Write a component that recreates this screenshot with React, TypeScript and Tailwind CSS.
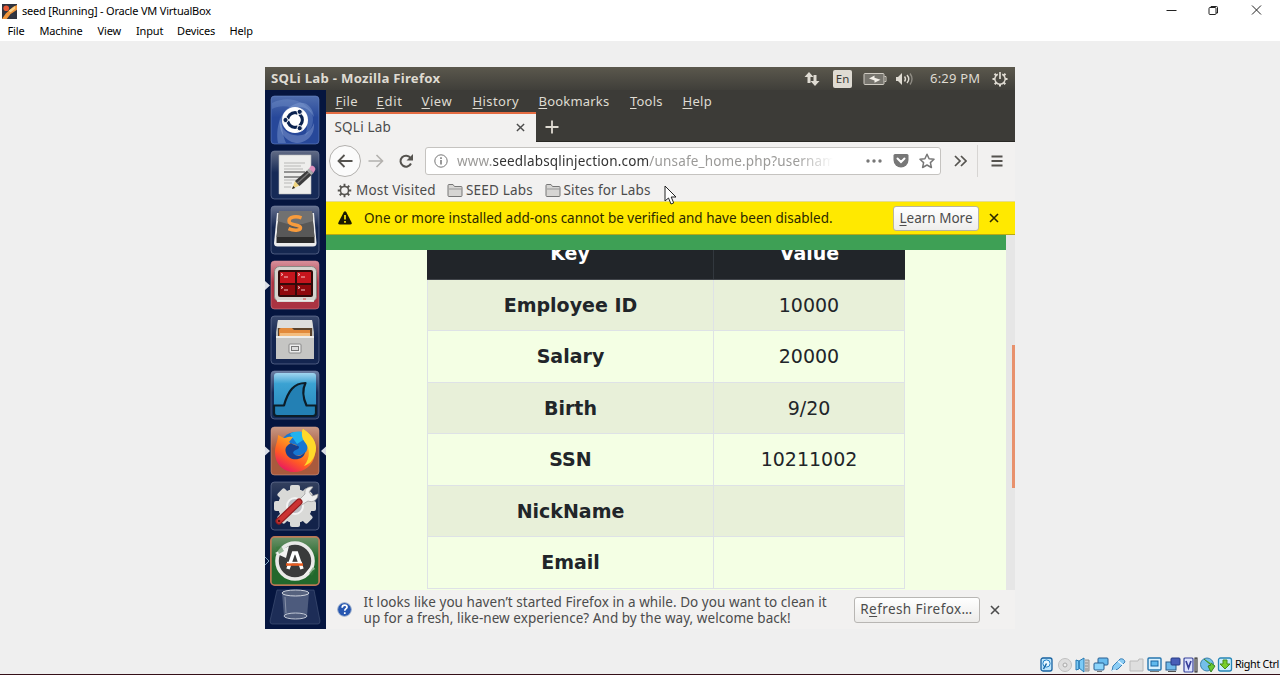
import type { ReactNode } from "react";

const windowMenu = [
  { label: "File", cls: "w-[32px]" },
  { label: "Machine", cls: "w-[58px]" },
  { label: "View", cls: "w-[38.5px]" },
  { label: "Input", cls: "w-[41px]" },
  { label: "Devices", cls: "w-[52.5px]" },
  { label: "Help", cls: "w-[40px]" },
];

const firefoxMenu = [
  { label: "File", cls: "w-[41px] tracking-[0.4px]" },
  { label: "Edit", cls: "w-[45px] tracking-[0.7px]" },
  { label: "View", cls: "w-[51px] tracking-[0.6px]" },
  { label: "History", cls: "w-[66px] tracking-[0.4px]" },
  { label: "Bookmarks", cls: "w-[91.5px] tracking-[0.2px]" },
  { label: "Tools", cls: "w-[52.5px] tracking-[0.2px]" },
  { label: "Help", cls: "w-[40px] tracking-[0.3px]" },
];

const rows = [
  ["Employee ID", "10000"],
  ["Salary", "20000"],
  ["Birth", "9/20"],
  ["SSN", "10211002"],
  ["NickName", ""],
  ["Email", ""],
];

function Accel({ text }: { text: string }) {
  return (
    <>
      <span className="underline decoration-1 underline-offset-2">{text[0]}</span>
      {text.slice(1)}
    </>
  );
}

function Close({ className }: { className: string }) {
  return (
    <svg viewBox="0 0 10 10" className={className} fill="none" stroke="currentColor" strokeWidth="1.6">
      <path d="M1 1l8 8M9 1L1 9" />
    </svg>
  );
}

function Tile({ id, from, to, edge = "#7d88a8", children }: { id: string; from: string; to: string; edge?: string; children: ReactNode }) {
  return (
    <svg viewBox="0 0 50 50" className="block h-[50px] w-[50px] shrink-0">
      <defs>
        <linearGradient id={id} x1="0" y1="0" x2="0" y2="1">
          <stop offset="0" stopColor={from} />
          <stop offset="0.45" stopColor={to} />
          <stop offset="1" stopColor={to} />
        </linearGradient>
      </defs>
      <rect x="1" y="1" width="48" height="48" rx="3.5" fill={`url(#${id})`} stroke={edge} strokeOpacity="0.55" />
      {children}
    </svg>
  );
}

function Dash() {
  return (
    <Tile id="t-dash" from="#4f6dad" to="#27489a" edge="#6f8acb">
      <path d="M8 48C5 30 12 12 28 8c9-2 15 5 16 14-5-9-12-12-20-9C12 18 9 30 16 48z" fill="#8ea9da" opacity=".4" />
      <path d="M2 8c14-7 30-4 39 8 4 8 2 18-6 25 4-10 2-18-6-24C20 10 10 10 2 14z" fill="#86a2d6" opacity=".3" />
      <path d="M10 22c0 14 10 20 22 18 5-1 10-6 12-12 1 12-7 20-18 20C14 46 8 36 10 22z" fill="#a8bde4" opacity=".35" />
      <circle cx="25" cy="25" r="13" fill="#fff" />
      <circle cx="25" cy="25" r="7.300" fill="none" stroke="#0b2350" strokeWidth="3.200" />
      <path d="M25 25h-11M25 25l5.500-9.500M25 25l5.500 9.500" stroke="#fff" strokeWidth="1.500" />
      <circle cx="25" cy="25" r="5.500" fill="#fff" />
      {[[15.5, 25], [29.7, 16.8], [29.7, 33.2]].map(([x, y]) => (
        <circle key={`${x}${y}`} cx={x} cy={y} r="2.600" fill="#0b2350" stroke="#fff" strokeWidth="1" />
      ))}
    </Tile>
  );
}

function Editor() {
  return (
    <Tile id="t-edit" from="#626b85" to="#162a57">
      <path d="M9 5h32v39H9z" fill="#eeeeec" stroke="#bcbcbc" strokeWidth=".6" />
      <path d="M14 13h21M14 16h17M14 19h19M14 22h21M14 27h20M14 30h15M14 33h8M14 37h7" stroke="#aaa" strokeWidth=".8" />
      <path d="M14 22h21M14 27h17" stroke="#555" strokeWidth="1" />
      <path d="M22 39l3-8 4.500 4.500z" fill="#eed47f" />
      <path d="M22 39l1.200-3 2 2z" fill="#222" />
      <path d="M25 31L37 20.500l4.500 4.500L29.500 36z" fill="#3c3c3c" />
      <path d="M27.500 33L39 22.500" stroke="#777" strokeWidth="1.300" />
      <path d="M37 20.500l2-2 4.500 4.500-2 2z" fill="#a8a8a8" />
      <path d="M39 18.500l2-2.400c2-1.400 5 1.800 4.200 3.800L43.500 23z" fill="#dc90bd" />
    </Tile>
  );
}

function Sublime() {
  return (
    <Tile id="t-sub" from="#66718f" to="#152750">
      <path d="M7 8h37l2.500 30q0 3.500-3.500 3.500H7.500q-3.500 0-3.500-3.500z" fill="#ececec" />
      <path d="M9 6h33l2.500 27v5h-38v-5z" fill="#2b2b2b" />
      <path d="M9 6h33l2.500 26h-38z" fill="#585858" />
      <path d="M9 6h33l1 10Q25 23 7.500 16z" fill="#7c7c7c" opacity=".7" />
      <path d="M31.500 12.800c-5-1.800-12.500-1.300-12.500 3.200 0 5 11.500 3.200 11.500 6.800 0 3-7 3-12 .9" fill="none" stroke="#f79b3c" strokeWidth="3.500" />
    </Tile>
  );
}

function Terminator() {
  return (
    <Tile id="t-term" from="#d7909b" to="#aa3342" edge="#dc8792">
      <rect x="4.500" y="6.500" width="42" height="35" rx="5" fill="#d5d4cf" stroke="#898782" />
      <path d="M7 41h37" stroke="#f4f4f0" strokeWidth="1.500" />
      <rect x="8" y="10" width="35" height="27" rx="2" fill="#310a0a" />
      <path d="M10 12h15v11H10zM27 12h14v11H27z" fill="#c6151d" />
      <path d="M10 25h15v10H10zM27 25h14v10H27z" fill="#8f080c" />
      <path d="M11 13.500l2 1-2 1M14 17h4M28 13.500l2 1-2 1M31 17h4M11 26.500l2 1-2 1M14 30h4M28 26.500l2 1-2 1M31 30h4" stroke="#f5c3c3" fill="none" strokeWidth="1" />
      <path d="M33 39h3" stroke="#d44" />
    </Tile>
  );
}

function Files() {
  return (
    <Tile id="t-files" from="#39486c" to="#142550">
      <path d="M8 5h34l2 12v24H6V17z" fill="#b9b9b6" />
      <path d="M8 5h34l1 8H7z" fill="#dededc" />
      <path d="M8 13h34v8H8z" fill="#59422c" />
      <path d="M9 15q0-2 2-2h11l2 2h16v7H9z" fill="#e28a3b" />
      <path d="M10 18h30v4H10z" fill="#f4bd7e" />
      <path d="M6 21h38v23H6z" fill="#c5c5c3" />
      <path d="M6 21h38v2H6z" fill="#ededeb" />
      <rect x="19" y="29" width="12" height="9" rx="1" fill="#eee" stroke="#888" />
      <rect x="21.500" y="31.500" width="7" height="4" fill="#ddd" stroke="#777" />
    </Tile>
  );
}

function Wireshark() {
  return (
    <Tile id="t-shark" from="#6a7da1" to="#142b59">
      <defs>
        <linearGradient id="fin" x1="0" y1="0" x2="0" y2="1">
          <stop offset="0" stopColor="#a2d6ef" />
          <stop offset=".25" stopColor="#3ba2d2" />
          <stop offset="1" stopColor="#2685bb" />
        </linearGradient>
      </defs>
      <rect x="4" y="3" width="42" height="43" rx="3" fill="url(#fin)" />
      <path d="M4 35.500h10C18 21 24 13 35.500 13c-4 8-2 16 1 22.500H46V43q0 3-3 3H7q-3 0-3-3z" fill="#2380b4" stroke="#0c1d28" strokeWidth="2.200" strokeLinejoin="round" />
    </Tile>
  );
}

function Firefox() {
  return (
    <Tile id="t-ff" from="#c99884" to="#a95a3d" edge="#d7a28e">
      <defs>
        <linearGradient id="fox" x1=".8" y1="0" x2=".25" y2="1">
          <stop offset="0" stopColor="#ffe72a" />
          <stop offset=".4" stopColor="#ff9922" />
          <stop offset=".7" stopColor="#ff5a25" />
          <stop offset="1" stopColor="#e91465" />
        </linearGradient>
      </defs>
      <circle cx="26" cy="23" r="17" fill="#1777d2" />
      <path d="M20 8c6-4 15-3 18 3L27 18z" fill="#22b3ee" />
      <path d="M8 9c3 1 5 3 7 3 4-2 8-1 8-1l-4 5c3 3 8 2 8 4 0 3-6 2-6 6 2 6 10 4 15 0 3-5 1-10-3-15-2-3-1-6 0-8 11 7 14 16 12 25-2 12-11 18-21 18C13 46 5 38 5 26 5 19 8 15 8 9z" fill="url(#fox)" />
      <path d="M21 17c3 3 8 2 8 4 0 3-5 2-6 6 4 5 9 3 12-1-1 9-16 10-19 1-2-6 2-8 5-10z" fill="#173f8e" />
      <path d="M33 3c12 8 15 17 12 25-2 7-6 10-11 12 7-9 6-18 0-25-3-5-2-9-1-12z" fill="#ffd92a" />
    </Tile>
  );
}

function Settings() {
  return (
    <Tile id="t-set" from="#34415f" to="#13234a">
      <g fill="#d9d9d7">
        {[0, 45, 90, 135].map((a) => (
          <rect key={a} x="20" y="4" width="10" height="42" rx="2" transform={`rotate(${a} 25 25)`} />
        ))}
        <circle cx="25" cy="25" r="17" />
      </g>
      <circle cx="25" cy="25" r="8" fill="#bcbdc2" stroke="#f2f2f2" strokeWidth="2" />
      <path d="M28 20L35 13c-1-5 3-8 8-7l-4 5 3 4 6-2c0 6-5 9-10 7L30 25z" fill="#eee" stroke="#999" strokeWidth=".7" />
      <path d="M9 40L29 21" stroke="#931e20" strokeWidth="7" strokeLinecap="round" />
      <path d="M9 40L29 21" stroke="#cb3333" strokeWidth="4.500" strokeLinecap="round" />
      <circle cx="9" cy="40" r="1.300" fill="#551414" />
    </Tile>
  );
}

function Updater() {
  return (
    <Tile id="t-up" from="#6d9269" to="#22682c" edge="#ef9f76">
      <rect x=".8" y=".8" width="48.400" height="48.400" rx="4" fill="none" stroke="#bd7654" strokeWidth="1.600" />
      <circle cx="25" cy="25" r="18" fill="#3a3b3b" />
      <circle cx="25" cy="25" r="18" fill="none" stroke="#e9e9e7" strokeWidth="3.600" />
      <path d="M5 17l14-7-3 12zM45 33l-13 8 10-12z" fill="#f3f3f1" />
      <path d="M6 11l5-1 3 5-5 3zM42 40l-3-3 4-6 3 2z" fill="#357a3a" opacity=".5" />
      <path d="M18 33l5.500-16h3L32 33" fill="none" stroke="#fff" strokeWidth="3.500" />
      <path d="M16 28.500h17" stroke="#e95c20" strokeWidth="2.600" />
      <path d="M17 26.500h15" stroke="#fff" strokeWidth="1.400" />
    </Tile>
  );
}

function Trash() {
  return (
    <svg viewBox="0 0 54 39" className="block h-[39px] w-[54px] shrink-0">
      <path d="M9 1h37l6 31q0 3-2 3H4q-2 0-2-3z" fill="#2d3d67" opacity=".6" stroke="#7483a3" strokeWidth=".6" />
      <path d="M14 4h27l-2 23q-11 6-23 0z" fill="#7d89a4" opacity=".5" />
      <ellipse cx="27.500" cy="4" rx="13.500" ry="3" fill="#56627e" stroke="#cdd2dc" />
      <ellipse cx="27.500" cy="27" rx="11.500" ry="3" stroke="#c0c7d5" fill="#4f5c7c" />
      <path d="M17 8l1 16" stroke="#dfe2e9" opacity=".4" />
    </svg>
  );
}

function Launcher() {
  return (
    <aside className="relative flex h-[539px] w-[61px] shrink-0 flex-col items-center bg-[#05153f] pt-[4.500px] pr-[2px]">
      <div className="flex h-[494.500px] flex-col gap-[5.200px]">
        <Dash />
        <Editor />
        <Sublime />
        <Terminator />
        <Files />
        <Wireshark />
        <Firefox />
        <Settings />
        <Updater />
      </div>
      <Trash />
      <svg viewBox="0 0 61 539" className="absolute inset-0 h-[539px] w-[61px]">
        <path d="M0 191l5 4.500-5 4.500zM0 356.500l5 4.500-5 4.500zM61 356.500l-5 4.500 5 4.500z" fill="#dadde6" />
        <path d="M0 467l4 4-4 4" fill="none" stroke="#7fa5bd" />
      </svg>
    </aside>
  );
}

function TopPanel() {
  return (
    <header className="flex h-[23px] shrink-0 items-center bg-linear-to-b from-[#5b584d] to-[#403f3a] pl-[6px] text-[#dfdbd2]">
      <span className="w-[532px] pt-[1.500px] text-[13.200px] font-bold tracking-[0.260px] whitespace-nowrap">SQLi Lab - Mozilla Firefox</span>
      <svg viewBox="0 0 18 16" className="h-4 w-[18px] shrink-0" fill="currentColor">
        <path d="M6 1l4.500 5H7.500v6h-3V6H1.500zM12 15l-4.500-5h3V4h3v6h3z" />
      </svg>
      <span className="ml-[12px] flex h-[18px] w-[19px] items-center justify-center rounded-[2px] bg-[#dfdbd2] text-[11.500px] text-[#3c3b37]">En</span>
      <svg viewBox="0 0 24 14" className="ml-[11px] h-[14px] w-6 shrink-0">
        <rect x="1" y="1.500" width="20" height="11" rx="1" fill="#77756e" stroke="#cfcbc2" strokeWidth="1" />
        <path d="M21.500 4.500h1.500v5h-1.500" fill="none" stroke="#cfcbc2" />
        <path d="M6 6.500l5.500-3v2.200l6 2-6 3V8.500z" fill="#f2efe8" />
      </svg>
      <svg viewBox="0 0 20 16" className="ml-[8px] h-4 w-5 shrink-0" fill="none" stroke="currentColor" strokeWidth="1.400">
        <path d="M1 6h2l4-4v12l-4-4H1z" fill="currentColor" stroke="none" />
        <path d="M9.500 5.500q2 2.500 0 5M12 4q3.500 4 0 8" />
        <path d="M15 2.500q4 5.500 0 11" opacity=".45" />
      </svg>
      <span className="ml-[15px] w-[52px] pt-px text-[13px] tracking-[0.200px] whitespace-nowrap">6:29 PM</span>
      <svg viewBox="0 0 16 16" className="ml-[10px] h-4 w-4 shrink-0" fill="none" stroke="currentColor">
        <path d="M5.800 3.300a5.200 5.200 0 1 0 4.400 0" strokeWidth="1.500" />
        <path d="M8 1v7" strokeWidth="1.700" />
        <path d="M.5 8h2.500M13 8h2.500M2.500 2.800l2 2M13.500 2.800l-2 2M2.700 13.300l2-2M13.300 13.300l-2-2M8 13v2.500" strokeWidth="2" />
      </svg>
    </header>
  );
}

function Folder() {
  return (
    <svg viewBox="0 0 17 15" className="h-[15px] w-[17px] shrink-0" fill="#d6d5d3" stroke="#777" strokeWidth="1">
      <path d="M1 12.500V2.500q0-1 1-1h4l1.500 2H14.500q.5 0 .5 1v8q0 1-1 1H2q-1 0-1-1z" />
      <path d="M2 6h12.500" stroke="#999" />
    </svg>
  );
}

function Gear() {
  return (
    <svg viewBox="0 0 16 16" className="h-[15px] w-[15px] shrink-0" fill="none" stroke="#55534f">
      <circle cx="8" cy="8" r="4.300" strokeWidth="1.600" />
      <path d="M8 .8v2.600M8 12.600v2.600M.8 8h2.600M12.600 8h2.600M2.900 2.900L4.800 4.800M11.200 11.200l1.900 1.900M13.100 2.900l-1.900 1.900M4.800 11.200l-1.900 1.900" strokeWidth="2" />
    </svg>
  );
}

function NavBar() {
  return (
    <div className="flex h-[37px] shrink-0 items-center pl-[3px] text-[#55534f]">
      <span className="flex h-8 w-8 shrink-0 items-center justify-center rounded-full border border-[#b2b0ad] bg-[#fbfbfb]">
        <svg viewBox="0 0 16 14" className="h-[14px] w-4" fill="none" stroke="currentColor" strokeWidth="1.800">
          <path d="M15.500 7H1.500M7.500 1l-6 6 6 6" />
        </svg>
      </span>
      <svg viewBox="0 0 16 14" className="ml-[7px] h-[14px] w-4 shrink-0" fill="none" stroke="#b3b1ae" strokeWidth="1.600">
        <path d="M.5 7h14M8.500 1l6 6-6 6" />
      </svg>
      <svg viewBox="0 0 16 16" className="ml-[14px] h-4 w-4 shrink-0" fill="none" stroke="currentColor" strokeWidth="2">
        <path d="M13 10.500A5.500 5.500 0 1 1 12.500 5" />
        <path d="M15 1v6.500H8.500z" fill="currentColor" stroke="none" />
      </svg>
      <div className="ml-[11px] flex h-[28px] w-[516px] shrink-0 items-center rounded-[3px] border border-[#c5c3c0] bg-white pl-[8px]">
        <svg viewBox="0 0 14 14" className="h-[14px] w-[14px] shrink-0" fill="none" stroke="#777">
          <circle cx="7" cy="7" r="6.200" />
          <path d="M7 6v4.500M7 3.300V5" strokeWidth="1.500" />
        </svg>
        <span className="mt-px ml-[9px] w-[376px] overflow-hidden mask-r-from-90% text-[13.500px] tracking-[0.170px] whitespace-nowrap text-[#9b9a98]">
          www.<span className="text-[#333]">seedlabsqlinjection.com</span>/unsafe_home.php?usernam
        </span>
        <svg viewBox="0 0 16 4" className="ml-[33px] h-1 w-4 shrink-0" fill="#777">
          <circle cx="2" cy="2" r="1.700" />
          <circle cx="8" cy="2" r="1.700" />
          <circle cx="14" cy="2" r="1.700" />
        </svg>
        <svg viewBox="0 0 16 15" className="ml-[11px] h-[15px] w-4 shrink-0">
          <path d="M2 1h12q1.500 0 1.500 1.500V7a7.500 7.500 0 0 1-15 0V2.500Q.5 1 2 1z" fill="#777" />
          <path d="M4.500 5.500L8 9l3.500-3.500" fill="none" stroke="#fff" strokeWidth="2" strokeLinecap="round" />
        </svg>
        <svg viewBox="0 0 16 16" className="ml-[10px] h-4 w-4 shrink-0" fill="none" stroke="#777" strokeWidth="1.500" strokeLinejoin="round">
          <path d="M8 1.200l2.100 4.500 4.900.6-3.600 3.300 1 4.900L8 12l-4.400 2.500 1-4.900L1 6.300l4.900-.6z" />
        </svg>
      </div>
      <svg viewBox="0 0 13 12" className="ml-[13px] h-3 w-[13px] shrink-0" fill="none" stroke="currentColor" strokeWidth="1.700">
        <path d="M1 1l5 5-5 5M7 1l5 5-5 5" />
      </svg>
      <span className="ml-[10px] h-8 w-px bg-[#d7d5d3]" />
      <svg viewBox="0 0 12 12" className="ml-[13px] h-3 w-3 shrink-0" stroke="currentColor" strokeWidth="1.800">
        <path d="M.5 1.500h11M.5 6h11M.5 10.500h11" />
      </svg>
    </div>
  );
}

function Page() {
  return (
    <main className="flex h-[355px] shrink-0 bg-[#e6e6e6]">
      <div className="flex h-full w-[679.500px] flex-col bg-[#f4ffe4]">
        <div className="h-[15px] shrink-0 bg-[#3ea055]" />
        <div className="flex min-h-0 flex-1 overflow-hidden pl-[101px] font-['DejaVu_Sans',sans-serif] text-[19px] leading-[26px] text-[#212529]">
          <div className="h-fit w-[478px]">
            <div className="flex h-[29.500px] border-b border-[#41454a] bg-[#212529] text-center font-bold text-white">
              <div className="-mt-[10px] w-[286px]">Key</div>
              <div className="w-px bg-[#32383e]" />
              <div className="-mt-[10px] flex-1">Value</div>
            </div>
            {rows.map(([key, value], i) => (
              <div key={key} className={`flex h-[51.500px] items-center border-x border-b border-[#dee2e6] text-center ${i % 2 ? "" : "bg-[#e8f0d9]"}`}>
                <div className="w-[285px] font-bold">{key}</div>
                <div className="h-full w-px bg-[#dee2e6]" />
                <div className="flex-1">{value}</div>
              </div>
            ))}
          </div>
        </div>
      </div>
      <div className="flex flex-1 justify-end pt-[110px]">
        <div className="h-[143px] w-[3px] bg-[#e8916c]" />
      </div>
    </main>
  );
}

function Browser() {
  return (
    <section className="flex h-[539px] w-[689px] flex-col bg-[#f2f1f0] text-[13.500px] text-[#4c4c4c]">
      <nav className="flex h-[22px] shrink-0 items-center bg-[#3c3b37] pt-px pl-[9.500px] text-[13px] text-[#dfdbd2]">
        {firefoxMenu.map((m) => (
          <span key={m.label} className={`shrink-0 whitespace-nowrap ${m.cls}`}>
            <Accel text={m.label} />
          </span>
        ))}
      </nav>
      <div className="flex h-[30px] shrink-0 bg-[#3c3b37] text-[#dfdbd2]">
        <div className="flex w-[210px] items-center border-t-2 border-[#e46c42] bg-[#f2f1f0] pb-px pl-[8.500px] text-[#4c4c4c]">
          <span className="w-[181px] tracking-[0.200px]">SQLi Lab</span>
          <Close className="h-[9px] w-[9px]" />
        </div>
        <div className="flex flex-1 items-center border-b border-[#292824] pl-[9px]">
          <svg viewBox="0 0 14 14" className="h-[14px] w-[14px]" stroke="currentColor" strokeWidth="1.800">
            <path d="M7 .5v13M.5 7h13" />
          </svg>
        </div>
      </div>
      <NavBar />
      <div className="flex h-[22px] shrink-0 items-center pl-[11px] tracking-[0.180px] whitespace-nowrap">
        <Gear />
        <span className="ml-[4px] w-[91px]">Most Visited</span>
        <Folder />
        <span className="ml-[2px] w-[79px]">SEED Labs</span>
        <Folder />
        <span className="ml-[1.500px]">Sites for Labs</span>
      </div>
      <div className="flex h-[34px] shrink-0 items-center border-t border-b border-t-[#e5dc8e] border-b-[#b8a913] bg-[#ffe900] pl-[12px] text-[#2b2800]">
        <svg viewBox="0 0 14 14" className="h-[14px] w-[14px] shrink-0">
          <path d="M5.700 1.200q1.300-2 2.600 0l5.200 10q.8 2.300-1.500 2.300H2q-2.300 0-1.500-2.300z" fill="#1b1a00" />
          <path d="M7 4v4.500M7 10v1.800" stroke="#ffe900" strokeWidth="1.700" />
        </svg>
        <span className="ml-[12px] w-[529px] whitespace-nowrap">One or more installed add-ons cannot be verified and have been disabled.</span>
        <span className="flex h-[25px] w-[86px] shrink-0 items-center justify-center rounded-[3px] border border-[#bab69c] bg-linear-to-b from-white to-[#eeedeb] text-[#4c4c4c]">
          <span className="whitespace-nowrap"><Accel text="Learn More" /></span>
        </span>
        <Close className="ml-[10px] h-[10px] w-[10px]" />
      </div>
      <Page />
      <footer className="flex h-[39px] shrink-0 items-center pl-[11px]">
        <svg viewBox="0 0 16 16" className="h-[15px] w-[15px] shrink-0">
          <circle cx="8" cy="8" r="7.300" fill="#2757b1" stroke="#9baecb" />
          <path d="M5.500 6q0-2.700 2.700-2.700 2.500 0 2.500 2.200c0 1.600-2.400 1.700-2.400 3.800M8.300 10.800v2" fill="none" stroke="#fff" strokeWidth="1.800" />
        </svg>
        <p className="ml-[11.500px] w-[490px] leading-[16px] tracking-[0.050px] whitespace-nowrap">
          It looks like you haven’t started Firefox in a while. Do you want to clean it
          <br />
          up for a fresh, like-new experience? And by the way, welcome back!
        </p>
        <span className="flex h-[26px] w-[126px] shrink-0 items-center justify-center rounded-[3px] border border-[#b8b6b3] bg-linear-to-b from-white to-[#ecebe9]">
          <span className="tracking-[0.420px] whitespace-nowrap">R<Accel text="efresh Firefox…" /></span>
        </span>
        <Close className="ml-[10px] h-[10px] w-[10px]" />
      </footer>
    </section>
  );
}

function StatusIcons() {
  return (
    <svg viewBox="0 0 194 16" className="h-4 w-[194px] shrink-0" fill="none">
      <rect x="2" y="1" width="11" height="13" rx="2" fill="#bce5fc" stroke="#1761a0" strokeWidth="1.300" />
      <circle cx="7.500" cy="6.500" r="3.600" fill="#e9f8ff" stroke="#2182c9" />
      <path d="M7.500 6.500l-3 5.500" stroke="#1767a6" strokeWidth="1.500" />
      <circle cx="26" cy="8" r="6.500" fill="#dedede" stroke="#c0c0c0" />
      <circle cx="26" cy="8" r="2" fill="#eee" stroke="#aaa" />
      <path d="M37 3l3 1v8l-3 1zM40 4l5-3v14l-5-4z" fill="#7ccaf6" stroke="#2779b2" />
      <path d="M46 3h4v11h-4M46 6h3M46 9h3M46 12h3" fill="#ccc" stroke="#8e8e8e" />
      <rect x="59" y="1" width="10" height="7" rx="1" fill="#68bbee" stroke="#285f91" />
      <rect x="55" y="6" width="10" height="7" rx="1" fill="#8dd5fb" stroke="#285f91" />
      <path d="M58 14.500h5" stroke="#777" />
      <path d="M73 14l1-5 7-7q4-1 5 3l-7 7z" fill="#8bcdf5" stroke="#3d82b8" />
      <path d="M79 4l5 4M73 14l4-1" stroke="#eef8ff" strokeWidth="1.500" />
      <path d="M91 4h8l1-2h4v12H91z" fill="#dedede" stroke="#bababa" />
      <rect x="109" y="1" width="13" height="12" rx="1" fill="#d8f1ff" stroke="#2675ae" strokeWidth="1.400" />
      <rect x="112" y="4" width="7" height="5" fill="#60b9ee" stroke="#1864a2" />
      <path d="M111 14.500h9" stroke="#777" />
      <rect x="127" y="5" width="10" height="8" fill="#70b9e9" stroke="#285b88" />
      <rect x="132" y="1" width="9" height="7" rx="1" fill="#485eb7" stroke="#273a86" />
      <path d="M129 14.500h8" stroke="#555" />
      <rect x="145" y="1" width="9" height="14" rx="1" fill="#dde3ff" stroke="#39439a" strokeWidth="1.200" />
      <path d="M147 4l2.500 7 2.500-7" stroke="#39409a" strokeWidth="1.700" />
      <rect x="156" y="1" width="2" height="14" stroke="#222" fill="#ddd" />
      <circle cx="168" cy="7.500" r="6.500" fill="#73bfe9" stroke="#3a80ab" />
      <path d="M165 2l7 6-3 1 3 6 4-6-4-3" fill="#68c832" stroke="#388323" />
      <rect x="179.500" y="1" width="13" height="13" rx="2" fill="#c8ecff" stroke="#2786b6" strokeWidth="1.300" />
      <path d="M184 3h4v4h3l-5 5-5-5h3z" fill="#79cd2b" stroke="#478b19" />
    </svg>
  );
}

export default function App() {
  return (
    <div className="relative flex h-[675px] w-[1280px] flex-col overflow-hidden bg-[#efefef] font-['Noto_Sans',sans-serif]">
      <div className="flex h-[21px] shrink-0 items-center bg-white pt-px pl-[2px] text-[11px] text-black">
        <svg viewBox="0 0 16 16" className="h-[15px] w-[15px] shrink-0">
          <rect width="16" height="16" fill="#30343f" />
          <path d="M0 16l4-6 8-7 4-2v5l-7 5-4 5z" fill="#ef963c" />
          <path d="M7 7l7-5v3l-5 4z" fill="#f9d38c" />
          <circle cx="4.500" cy="4.500" r="3" fill="#e85935" />
          <circle cx="11.500" cy="12.500" r="2.500" fill="#343844" />
        </svg>
        <span className="ml-[5px] w-[1144px] tracking-[-0.200px]">seed [Running] - Oracle VM VirtualBox</span>
        <svg viewBox="0 0 96 12" className="mb-[2px] h-3 w-[96px] shrink-0" fill="none" stroke="#222" strokeWidth="1">
          <path d="M.5 6.500h10M86 1.500l9 9M95 1.500l-9 9" />
          <rect x="43" y="3.500" width="7" height="7" rx="1" />
          <path d="M45 3.500v-1h5.500q1 0 1 1V9H50" />
        </svg>
      </div>
      <nav className="flex h-5 shrink-0 items-center bg-white pt-px pl-[7.500px] text-[11px] text-black">
        {windowMenu.map((m) => (
          <span key={m.label} className={`shrink-0 tracking-[-0.150px] ${m.cls}`}>{m.label}</span>
        ))}
      </nav>
      <div className="flex min-h-0 flex-1 justify-center pt-[26px]">
        <div className="flex h-[562px] w-[750px] flex-col">
          <TopPanel />
          <div className="flex">
            <Launcher />
            <Browser />
          </div>
        </div>
      </div>
      <footer className="flex h-[19px] shrink-0 items-center justify-end border-b border-[#351018] bg-[#efefef] pb-px text-[10.800px] text-black">
        <StatusIcons />
        <span className="ml-[2px] w-[45px] tracking-[-0.350px] whitespace-nowrap">Right Ctrl</span>
      </footer>
      <svg viewBox="0 0 12 20" className="absolute top-[185px] left-[664px] h-5 w-3">
        <path d="M1 1v15l3.500-3 2.500 6 2.700-1.100L7.200 12H12z" fill="#fff" stroke="#222" />
      </svg>
    </div>
  );
}
